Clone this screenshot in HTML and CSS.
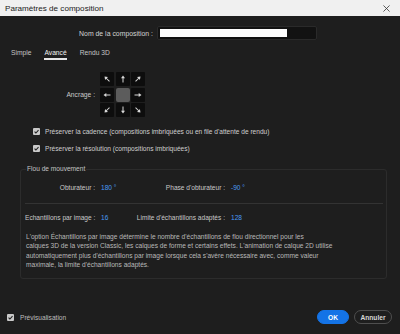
FILE: index.html
```html
<!DOCTYPE html>
<html lang="fr">
<head>
  <meta charset="UTF-8">
  <title>Paramètres de composition</title>
  <link rel="stylesheet" href="styles.css">
</head>
<body>

  <div class="titlebar">
    <span>Paramètres de composition</span>
    <svg class="close" viewBox="0 0 8 8"><path d="M0.5 0.5 L7.5 7.5 M7.5 0.5 L0.5 7.5"/></svg>
  </div>

  <div class="dialog">
    <div class="name-row">
      <label class="name-label">Nom de la composition :</label>
      <div class="name-input"><div class="name-value"></div></div>
    </div>

    <div class="tabs">
      <span class="tab">Simple</span>
      <span class="tab active">Avancé</span>
      <span class="tab">Rendu 3D</span>
    </div>

    <div class="anchor-row">
      <label class="anchor-label">Ancrage :</label>
      <div class="anchor-grid">
        <div class="cell"><svg viewBox="0 0 14 14"><g transform="rotate(-45 7 7)"><path d="M7 3.5 L9 6.3 L7.5 6.3 L7.5 10.5 L6.5 10.5 L6.5 6.3 L5 6.3 Z"/></g></svg></div>
        <div class="cell"><svg viewBox="0 0 14 14"><path d="M7 3.5 L9 6.3 L7.5 6.3 L7.5 10.5 L6.5 10.5 L6.5 6.3 L5 6.3 Z"/></svg></div>
        <div class="cell"><svg viewBox="0 0 14 14"><g transform="rotate(45 7 7)"><path d="M7 3.5 L9 6.3 L7.5 6.3 L7.5 10.5 L6.5 10.5 L6.5 6.3 L5 6.3 Z"/></g></svg></div>
        <div class="cell"><svg viewBox="0 0 14 14"><g transform="rotate(-90 7 7)"><path d="M7 3.5 L9 6.3 L7.5 6.3 L7.5 10.5 L6.5 10.5 L6.5 6.3 L5 6.3 Z"/></g></svg></div>
        <div class="cell center"></div>
        <div class="cell"><svg viewBox="0 0 14 14"><g transform="rotate(90 7 7)"><path d="M7 3.5 L9 6.3 L7.5 6.3 L7.5 10.5 L6.5 10.5 L6.5 6.3 L5 6.3 Z"/></g></svg></div>
        <div class="cell"><svg viewBox="0 0 14 14"><g transform="rotate(-135 7 7)"><path d="M7 3.5 L9 6.3 L7.5 6.3 L7.5 10.5 L6.5 10.5 L6.5 6.3 L5 6.3 Z"/></g></svg></div>
        <div class="cell"><svg viewBox="0 0 14 14"><g transform="rotate(180 7 7)"><path d="M7 3.5 L9 6.3 L7.5 6.3 L7.5 10.5 L6.5 10.5 L6.5 6.3 L5 6.3 Z"/></g></svg></div>
        <div class="cell"><svg viewBox="0 0 14 14"><g transform="rotate(135 7 7)"><path d="M7 3.5 L9 6.3 L7.5 6.3 L7.5 10.5 L6.5 10.5 L6.5 6.3 L5 6.3 Z"/></g></svg></div>
      </div>
    </div>

    <div class="checks">
      <div class="check">
        <span class="box"><svg viewBox="0 0 8 8"><path d="M1.8 4.2 L3.3 5.7 L6.3 2.4"/></svg></span>
        Préserver la cadence (compositions imbriquées ou en file d'attente de rendu)
      </div>
      <div class="check">
        <span class="box"><svg viewBox="0 0 8 8"><path d="M1.8 4.2 L3.3 5.7 L6.3 2.4"/></svg></span>
        Préserver la résolution (compositions imbriquées)
      </div>
    </div>

    <fieldset class="group">
      <legend>Flou de mouvement</legend>
      <div class="fields">
        <span class="field-label">Obturateur :</span>
        <span class="field-value">180 °</span>
        <span class="field-label">Phase d'obturateur :</span>
        <span class="field-value">-90 °</span>
      </div>
      <hr class="divider">
      <div class="fields">
        <span class="field-label">Echantillons par image :</span>
        <span class="field-value">16</span>
        <span class="field-label">Limite d'échantillons adaptés :</span>
        <span class="field-value">128</span>
      </div>
      <p class="note">
        L'option Échantillons par image détermine le nombre d'échantillons de flou directionnel pour les<br>
        calques 3D de la version Classic, les calques de forme et certains effets. L'animation de calque 2D utilise<br>
        automatiquement plus d'échantillons par image lorsque cela s'avère nécessaire avec, comme valeur<br>
        maximale, la limite d'échantillons adaptés.
      </p>
    </fieldset>

    <div class="footer">
      <div class="check preview">
        <span class="box"><svg viewBox="0 0 8 8"><path d="M1.8 4.2 L3.3 5.7 L6.3 2.4"/></svg></span>
        Prévisualisation
      </div>
      <div class="buttons">
        <button class="btn primary">OK</button>
        <button class="btn">Annuler</button>
      </div>
    </div>
  </div>

</body>
</html>
```

FILE: styles.css
```css
body {
  margin: 0;
  width: 400px;
  height: 334px;
  overflow: hidden;
  font-family: 'Liberation Sans', Arial, sans-serif;
  font-size: 6.6px;
  color: #c9c9c9;
  background: #1e1e1e;
}

.titlebar {
  height: 16px;
  background: #f0f0f0;
  color: #1a1a1a;
  font-size: 8.1px;
  display: flex;
  align-items: center;
  justify-content: space-between;
  padding: 0 10px 0 5px;
}

.close {
  width: 7px;
  height: 7px;
  stroke: #333;
  stroke-width: 0.9;
}

.dialog {
  height: 318px;
  display: flex;
  flex-direction: column;
}

/* nom */
.name-row {
  display: flex;
  align-items: center;
  margin-top: 10px;
  gap: 4px;
}

.name-label {
  width: 153px;
  text-align: right;
  font-size: 6.9px;
  color: #d4d4d4;
}

.name-input {
  width: 160px;
  height: 14px;
  box-sizing: border-box;
  background: #121212;
  border: 1px solid #2a2a2a;
  border-radius: 2px;
  padding: 2px 2px;
}

.name-value {
  width: 127px;
  height: 8px;
  background: #fff;
}

/* onglets */
.tabs {
  display: flex;
  gap: 13px;
  margin-top: 7px;
  padding-left: 11px;
}

.tab {
  padding-top: 1px;
  line-height: 10px;
  border-bottom: 2px solid transparent;
  font-size: 6.7px;
  color: #c4c4c4;
}

.tab.active {
  color: #f0f0f0;
  border-bottom-color: #e6e6e6;
}

/* ancrage */
.anchor-row {
  display: flex;
  align-items: center;
  gap: 5px;
  margin-top: 12px;
}

.anchor-label {
  width: 95px;
  text-align: right;
  font-size: 6.7px;
}

.anchor-grid {
  display: grid;
  grid-template-columns: repeat(3, 14px);
  grid-template-rows: repeat(3, 14px);
  gap: 1.5px;
}

.cell {
  background: #0d0d0d;
  border-radius: 1px;
  display: flex;
}

.cell svg {
  width: 14px;
  height: 14px;
  fill: #d8d8d8;
}

.cell.center {
  background: #5c5c5c;
  border-radius: 2px;
}

/* cases */
.checks {
  display: flex;
  flex-direction: column;
  gap: 7px;
  margin-top: 9px;
  padding-left: 33px;
}

.check {
  display: flex;
  align-items: center;
  gap: 5px;
  height: 10px;
  color: #cfcfcf;
}

.box {
  width: 7px;
  height: 7px;
  border-radius: 1px;
  background: #c9c9c9;
  display: flex;
}

.box svg {
  width: 7px;
  height: 7px;
  fill: none;
  stroke: #1e1e1e;
  stroke-width: 1.2;
}

/* flou de mouvement */
.group {
  margin: 11px 13px 0 20px;
  padding: 0 4px 9px 4px;
  border: 1px solid #2c2c2c;
  border-radius: 3px;
}

.group legend {
  padding: 0 1px;
  margin-left: 1px;
  line-height: 10px;
  color: #c4c4c4;
}

.fields {
  display: grid;
  grid-template-columns: 70px 29px 89px auto;
  column-gap: 6px;
  line-height: 10px;
  white-space: nowrap;
}

.fields:first-of-type {
  margin-top: 9px;
}

.field-label {
  text-align: right;
  direction: rtl;
  unicode-bidi: plaintext;
}

.field-value {
  color: #4a9bf2;
}

.divider {
  margin: 9.5px -1px 9.5px 0;
  border: none;
  border-top: 1px solid #333;
}

.note {
  margin: 9px 0 0 1px;
  line-height: 9.3px;
  font-size: 6.6px;
  color: #b9b9b9;
  white-space: nowrap;
}

/* bas */
.footer {
  margin-top: auto;
  display: flex;
  align-items: center;
  justify-content: space-between;
  padding: 0 8px 10px 7px;
}

.check.preview {
  gap: 6px;
  color: #bdbdbd;
}

.buttons {
  display: flex;
  gap: 5px;
}

.btn {
  height: 14px;
  padding: 0;
  border: 1.5px solid #4e4e4e;
  border-radius: 8px;
  background: transparent;
  color: #d8d8d8;
  font-family: inherit;
  font-size: 6.6px;
  font-weight: bold;
  width: 38px;
}

.btn.primary {
  width: 32px;
  background: #1473e6;
  border-color: #1473e6;
  color: #fff;
}
```
